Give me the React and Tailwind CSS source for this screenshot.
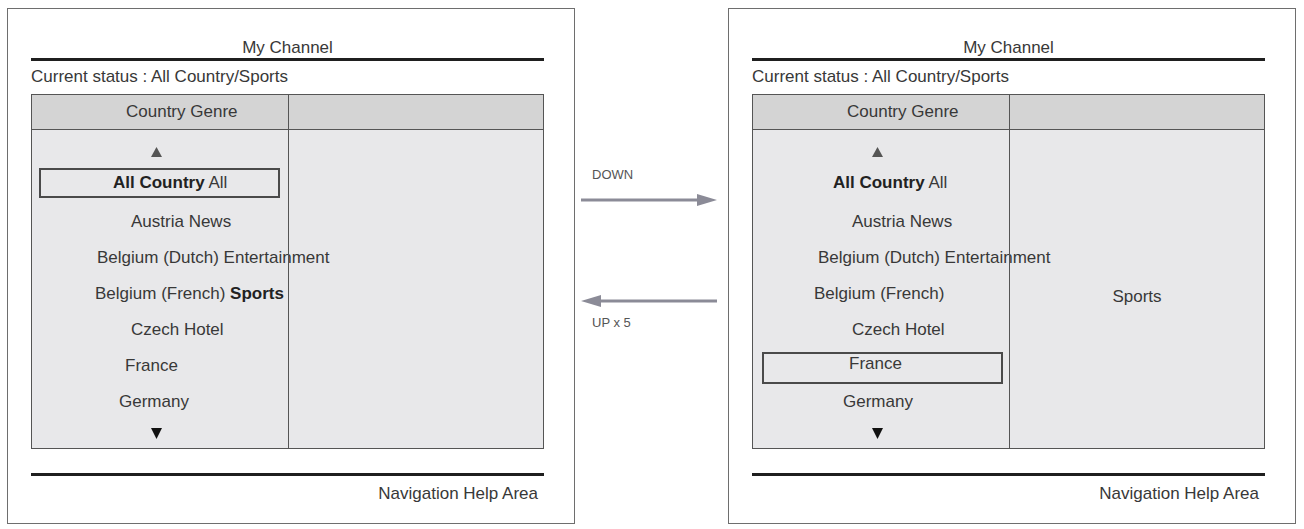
import React from "react";

const FONT = { fontFamily: '"Liberation Sans", Arial, sans-serif' };

const LEFT_ROWS = [
  { pl: "pl-[81px]", h: "h-[37px]", content: <><b className="font-bold text-[#222]">All Country</b> All</>, box: "top-[3px] left-[7px] h-[30px]" },
  { pl: "pl-[99px]", content: "Austria News" },
  { pl: "pl-[65px]", content: "Belgium (Dutch) Entertainment" },
  { pl: "pl-[63px]", content: <>Belgium (French) <b className="font-bold text-[#222]">Sports</b></> },
  { pl: "pl-[99px]", content: "Czech Hotel" },
  { pl: "pl-[93px]", content: "France" },
  { pl: "pl-[87px]", content: "Germany" },
];

const RIGHT_ROWS = [
  { pl: "pl-[80px]", h: "h-[37px]", content: <><b className="font-bold text-[#222]">All Country</b> All</> },
  { pl: "pl-[99px]", content: "Austria News" },
  { pl: "pl-[65px]", content: "Belgium (Dutch) Entertainment" },
  { pl: "pl-[61px]", content: "Belgium (French)" },
  { pl: "pl-[99px]", content: "Czech Hotel" },
  { pl: "pl-[96px]", content: "France", box: "top-[6px] left-[9px] h-[32px]", boxed: true },
  { pl: "pl-[90px]", content: "Germany" },
];

function Row({ row }) {
  return (
    <div className={`relative ${row.h || "h-[36px]"} flex items-center whitespace-nowrap ${row.pl}`}>
      {row.box && (
        <div className={`absolute w-[241px] border-2 border-[#4a4a4a] ${row.box}`} />
      )}
      <span className={row.boxed ? "-mt-[1px]" : row.h ? "-mt-[2px]" : "mt-[3px]"}>{row.content}</span>
    </div>
  );
}

function Panel({ rows, rightText }) {
  return (
    <div className="w-[568px] h-[516px] shrink-0 border border-[#6e6e6e] pl-[23px] pr-[30px] flex flex-col text-[17px] text-[#383838] leading-[20px]">
      <div className="pt-[29px] text-center">My Channel</div>
      <div className="h-[3px] bg-[#1f1f1f]" />
      <div className="mt-[6px]">Current status : All Country/Sports</div>

      <div className="mt-[7px] border border-[#555] flex flex-col">
        <div className="h-[35px] flex bg-[#d4d4d4] border-b border-[#555]">
          <div className="w-[256px] flex items-center pl-[94px]">Country Genre</div>
          <div className="flex-1 border-l border-[#555]" />
        </div>
        <div className="h-[318px] flex bg-[#e8e8ea]">
          <div className="w-[256px] flex flex-col pt-[9px]">
            <div className="h-[26px] flex items-center pl-[119px]">
              <svg width="11" height="10" viewBox="0 0 11 10"><polygon points="5.5,0 11,10 0,10" fill="#555" /></svg>
            </div>
            {rows.map((r, i) => <Row key={i} row={r} />)}
            <div className="h-[30px] flex items-center pl-[119px]">
              <svg width="11" height="11" viewBox="0 0 11 11"><polygon points="0,0 11,0 5.5,11" fill="#111" /></svg>
            </div>
          </div>
          <div className="relative flex-1 border-l border-[#555] flex items-center justify-center pt-[16px]">
            {rightText}
          </div>
        </div>
      </div>

      <div className="mt-[24px] h-[3px] bg-[#1f1f1f]" />
      <div className="mt-[8px] text-right pr-[6px]">Navigation Help Area</div>
    </div>
  );
}

function Arrow({ dir }) {
  return (
    <svg width="136" height="12" viewBox="0 0 136 12">
      {dir === "right" ? (
        <>
          <line x1="0" y1="6" x2="120" y2="6" stroke="#8b8b97" strokeWidth="3" />
          <polygon points="116,0 136,6 116,12" fill="#8b8b97" />
        </>
      ) : (
        <>
          <line x1="16" y1="6" x2="136" y2="6" stroke="#8b8b97" strokeWidth="3" />
          <polygon points="20,0 0,6 20,12" fill="#8b8b97" />
        </>
      )}
    </svg>
  );
}

export default function App() {
  return (
    <div className="w-[1304px] h-[529px] bg-white flex pt-[8px] pl-[7px]" style={FONT}>
      <Panel rows={LEFT_ROWS} rightText={null} />

      <div className="w-[153px] shrink-0 flex flex-col pl-[6px] text-[13px] leading-[16px] text-[#555]">
        <div className="mt-[159px] pl-[11px]">DOWN</div>
        <div className="mt-[11px] h-[12px] flex"><Arrow dir="right" /></div>
        <div className="mt-[89px] h-[12px] flex"><Arrow dir="left" /></div>
        <div className="mt-[8px] pl-[11px]">UP x 5</div>
      </div>

      <Panel rows={RIGHT_ROWS} rightText="Sports" />
    </div>
  );
}
